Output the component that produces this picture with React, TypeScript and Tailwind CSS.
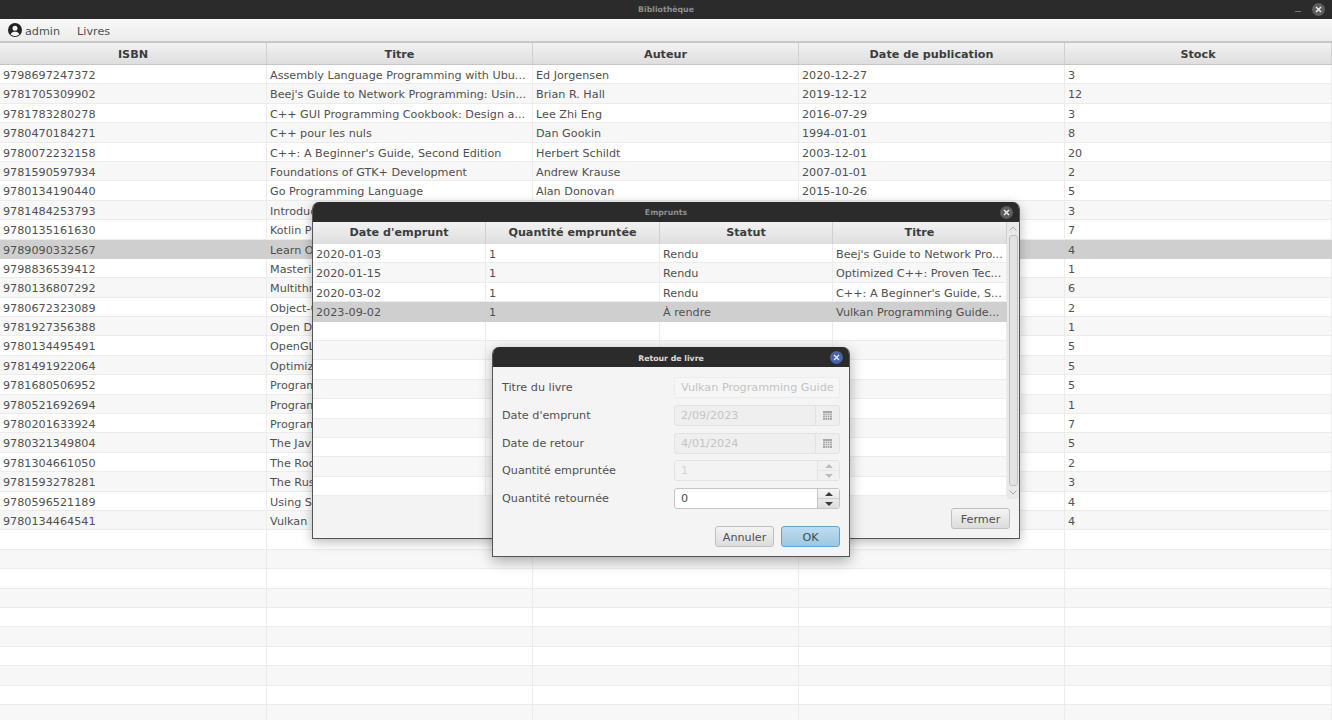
import React from "react";

const books: [string, string, string, string, string][] = [
  ["9798697247372", "Assembly Language Programming with Ubu...", "Ed Jorgensen", "2020-12-27", "3"],
  ["9781705309902", "Beej's Guide to Network Programming: Usin...", "Brian R. Hall", "2019-12-12", "12"],
  ["9781783280278", "C++ GUI Programming Cookbook: Design a...", "Lee Zhi Eng", "2016-07-29", "3"],
  ["9780470184271", "C++ pour les nuls", "Dan Gookin", "1994-01-01", "8"],
  ["9780072232158", "C++: A Beginner's Guide, Second Edition", "Herbert Schildt", "2003-12-01", "20"],
  ["9781590597934", "Foundations of GTK+ Development", "Andrew Krause", "2007-01-01", "2"],
  ["9780134190440", "Go Programming Language", "Alan Donovan", "2015-10-26", "5"],
  ["9781484253793", "Introduction", "", "", "3"],
  ["9780135161630", "Kotlin Programming", "", "", "7"],
  ["9789090332567", "Learn OpenGL", "", "", "4"],
  ["9798836539412", "Mastering", "", "", "1"],
  ["9780136807292", "Multithreading", "", "", "6"],
  ["9780672323089", "Object-Oriented", "", "", "2"],
  ["9781927356388", "Open Data", "", "", "1"],
  ["9780134495491", "OpenGL", "", "", "5"],
  ["9781491922064", "Optimized", "", "", "5"],
  ["9781680506952", "Programming", "", "", "5"],
  ["9780521692694", "Programming", "", "", "1"],
  ["9780201633924", "Programming", "", "", "7"],
  ["9780321349804", "The Java", "", "", "5"],
  ["9781304661050", "The Rook", "", "", "2"],
  ["9781593278281", "The Rust", "", "", "3"],
  ["9780596521189", "Using SQL", "", "", "4"],
  ["9780134464541", "Vulkan", "", "", "4"],
  ["", "", "", "", ""],
  ["", "", "", "", ""],
  ["", "", "", "", ""],
  ["", "", "", "", ""],
  ["", "", "", "", ""],
  ["", "", "", "", ""],
  ["", "", "", "", ""],
  ["", "", "", "", ""],
  ["", "", "", "", ""],
  ["", "", "", "", ""],
];

const loans: [string, string, string, string][] = [
  ["2020-01-03", "1", "Rendu", "Beej's Guide to Network Pro..."],
  ["2020-01-15", "1", "Rendu", "Optimized C++: Proven Tec..."],
  ["2020-03-02", "1", "Rendu", "C++: A Beginner's Guide, S..."],
  ["2023-09-02", "1", "À rendre", "Vulkan Programming Guide..."],
  ["", "", "", ""],
  ["", "", "", ""],
  ["", "", "", ""],
  ["", "", "", ""],
  ["", "", "", ""],
  ["", "", "", ""],
  ["", "", "", ""],
  ["", "", "", ""],
  ["", "", "", ""],
];

const mainCols = ["w-[267px]", "w-[266px]", "w-[266px]", "w-[266px]", "w-[267px]"];
const mainHead = ["ISBN", "Titre", "Auteur", "Date de publication", "Stock"];
const loanCols = ["w-[173px]", "w-[174px]", "w-[173px]", "w-[174px]"];
const loanHead = ["Date d'emprunt", "Quantité empruntée", "Statut", "Titre"];

function CloseDot({ blue = false }: { blue?: boolean }) {
  return (
    <span className={`flex h-[13px] w-[13px] items-center justify-center rounded-full ${blue ? "bg-[#4a63a8]" : "bg-[#5e5e5e]"}`}>
      <svg width="7" height="7" viewBox="0 0 7 7" fill="none">
        <path d="M1 1L6 6M6 1L1 6" stroke={blue ? "#e4e8f4" : "#f0f0f0"} strokeWidth="1.4" />
      </svg>
    </span>
  );
}

function CalendarIcon() {
  return (
    <svg width="9" height="9" viewBox="0 0 9 9">
      <rect width="9" height="9" fill="#a8a8a8" />
      <path d="M0 2.5H9M0 4.5H9M0 6.5H9M2.5 2V9M4.5 2V9M6.5 2V9" stroke="#e2e2e2" strokeWidth="0.7" />
    </svg>
  );
}

function Field({ label, children }: { label: string; children: React.ReactNode }) {
  return (
    <div className="flex h-[21px] items-center justify-between">
      <span className="pt-[2px]">{label}</span>
      {children}
    </div>
  );
}

function DateField({ value }: { value: string }) {
  return (
    <div className="flex h-[21px] w-[166px] rounded-[3px] border border-[#e2e2e2] bg-[#efefef]">
      <span className="flex-1 pl-[6px] leading-[19px] text-[#c4c4c4]">{value}</span>
      <span className="flex w-[24px] items-center justify-center border-l border-[#e2e2e2]">
        <CalendarIcon />
      </span>
    </div>
  );
}

function Spinner({ value, disabled = false }: { value: string; disabled?: boolean }) {
  const c = disabled ? "#bdbdbd" : "#3a3a3a";
  return (
    <div className={`flex h-[21px] w-[166px] rounded-[3px] border ${disabled ? "border-[#e2e2e2] bg-[#f3f3f3]" : "border-[#c4c4c4] bg-white"}`}>
      <span className={`flex-1 pl-[6px] leading-[19px] ${disabled ? "text-[#d4d4d4]" : "text-[#505050]"}`}>{value}</span>
      <span className={`flex w-[22px] flex-col border-l ${disabled ? "border-[#e2e2e2] bg-[#f1f1f1]" : "border-[#c4c4c4] bg-gradient-to-b from-[#f6f6f6] to-[#dedede]"}`}>
        <span className={`flex flex-1 items-center justify-center border-b ${disabled ? "border-[#e6e6e6]" : "border-[#cfcfcf]"}`}>
          <svg width="8" height="4" viewBox="0 0 8 4"><path d="M0 4L4 0L8 4Z" fill={c} /></svg>
        </span>
        <span className="flex flex-1 items-center justify-center">
          <svg width="8" height="4" viewBox="0 0 8 4"><path d="M0 0L4 4L8 0Z" fill={c} /></svg>
        </span>
      </span>
    </div>
  );
}

export default function App() {
  return (
    <div
      className="relative h-[720px] w-[1332px] overflow-hidden bg-white text-[11.2px] text-[#505050]"
      style={{ fontFamily: '"DejaVu Sans", sans-serif' }}
    >
      <div className="relative flex h-[19px] items-center justify-center bg-[#2b2b2b] pt-[1px] text-[7.8px] font-bold text-[#8f8f8f]">
        Bibliothèque
        <div className="absolute right-[7px] top-[3px] flex items-center gap-[11px]">
          <span className="mt-[4px] h-px w-[6px] bg-[#777]" />
          <CloseDot />
        </div>
      </div>

      <div className="flex h-[23px] items-center gap-[17px] border-b border-[#c8c8c8] bg-gradient-to-b from-[#f8f8f8] to-[#ececec] pl-[8px] pt-[1px]">
        <span className="flex items-center gap-[3px]">
          <svg width="14" height="14" viewBox="0 0 14 14">
            <circle cx="7" cy="7" r="7" fill="#222" />
            <circle cx="7" cy="5.3" r="2.5" fill="#f2f2f2" />
            <path d="M2.6 11.2C3.6 9.3 5.2 8.8 7 8.8C8.8 8.8 10.4 9.3 11.4 11.2C10.2 12.4 8.7 13 7 13C5.3 13 3.8 12.4 2.6 11.2Z" fill="#f2f2f2" />
          </svg>
          <span className="pt-[3px]">admin</span>
        </span>
        <span className="pt-[3px]">Livres</span>
      </div>

      <div className="flex h-[23px] border-y border-[#c6c6c6] bg-gradient-to-b from-[#f2f2f2] to-[#dedede] font-bold text-[#3c3c3c]">
        {mainHead.map((h, i) => (
          <div key={h} className={`${mainCols[i]} border-r border-[#d0d0d0] text-center leading-[23px]`}>{h}</div>
        ))}
      </div>

      <div>
        {books.map((b, r) => (
          <div
            key={r}
            className={`flex h-[19.4px] border-b ${r === 9 ? "border-[#cfcfcf] bg-[#cfcfcf]" : r % 2 ? "border-[#ececec] bg-[#f7f7f7]" : "border-[#ececec] bg-white"}`}
          >
            {b.map((c, i) => (
              <div
                key={i}
                className={`${mainCols[i]} overflow-hidden whitespace-nowrap border-r ${r === 9 ? "border-[#cfcfcf]" : "border-[#ececec]"} pl-[3px] pr-[3px] leading-[22px]`}
              >
                {c}
              </div>
            ))}
          </div>
        ))}
      </div>

      {/* Emprunts window */}
      <div className="absolute left-[312px] top-[202px] flex h-[337px] w-[708px] flex-col overflow-hidden rounded-t-[7px] border-x border-b border-[#555] bg-[#f3f3f3] shadow-[0_3px_12px_rgba(0,0,0,0.28)]">
        <div className="relative flex h-[20px] shrink-0 items-center justify-center bg-[#2b2b2b] pt-[1px] text-[7.8px] font-bold text-[#8f8f8f]">
          Emprunts
          <div className="absolute right-[6px] top-[4px]"><CloseDot /></div>
        </div>
        <div className="flex h-[277px] shrink-0">
          <div className="flex w-[694px] flex-col overflow-hidden">
            <div className="flex h-[22px] shrink-0 bg-gradient-to-b from-[#f2f2f2] to-[#dedede] font-bold text-[#3c3c3c]">
              {loanHead.map((h, i) => (
                <div key={h} className={`${loanCols[i]} border-r border-[#d0d0d0] text-center leading-[22px]`}>{h}</div>
              ))}
            </div>
            {loans.map((l, r) => (
              <div key={r} className={`flex h-[19.4px] shrink-0 border-b ${r === 3 ? "border-[#cfcfcf] bg-[#cfcfcf]" : r % 2 ? "border-[#ececec] bg-[#f7f7f7]" : "border-[#ececec] bg-white"}`}>
                {l.map((c, i) => (
                  <div key={i} className={`${loanCols[i]} overflow-hidden whitespace-nowrap border-r ${r === 3 ? "border-[#cfcfcf]" : "border-[#ececec]"} pl-[3px] leading-[22px]`}>{c}</div>
                ))}
              </div>
            ))}
          </div>
          <div className="flex w-[12px] flex-col items-center bg-[#e9e9e9]">
            <div className="flex h-[13px] items-center justify-center">
              <svg width="8" height="5" viewBox="0 0 8 5" fill="none"><path d="M0.5 4.5L4 1L7.5 4.5" stroke="#a8a8a8" /></svg>
            </div>
            <div className="w-[9px] flex-1 rounded-[3px] border border-[#c0c0c0] bg-[#e2e2e2]" />
            <div className="flex h-[13px] items-center justify-center">
              <svg width="8" height="5" viewBox="0 0 8 5" fill="none"><path d="M0.5 0.5L4 4L7.5 0.5" stroke="#a8a8a8" /></svg>
            </div>
          </div>
        </div>
        <div className="flex flex-1 justify-end pr-[9px] pt-[9px]">
          <button className="h-[21px] w-[59px] rounded-[3px] border border-[#c0c0c0] bg-gradient-to-b from-[#f4f4f4] to-[#dcdcdc] pt-[3px] text-[#505050]">Fermer</button>
        </div>
      </div>

      {/* Retour de livre dialog */}
      <div className="absolute left-[492px] top-[347px] flex h-[210px] w-[358px] flex-col overflow-hidden rounded-t-[7px] border-x border-b border-[#555] bg-[#f4f4f4] shadow-[0_4px_14px_rgba(0,0,0,0.32)]">
        <div className="relative flex h-[20px] shrink-0 items-center justify-center bg-[#2b2b2b] pt-[3px] text-[7.8px] font-bold text-[#dcdcdc]">
          Retour de livre
          <div className="absolute right-[6px] top-[4px]"><CloseDot blue /></div>
        </div>
        <div className="flex flex-col gap-[6.75px] pl-[9px] pr-[9px] pt-[10px]">
          <Field label="Titre du livre">
            <div className="h-[21px] w-[166px] overflow-hidden whitespace-nowrap rounded-[2px] border border-[#ececec] bg-[#f6f6f6] pl-[6px] leading-[19px] text-[#c4c4c4]">Vulkan Programming Guide</div>
          </Field>
          <Field label="Date d'emprunt"><DateField value="2/09/2023" /></Field>
          <Field label="Date de retour"><DateField value="4/01/2024" /></Field>
          <Field label="Quantité empruntée"><Spinner value="1" disabled /></Field>
          <Field label="Quantité retournée"><Spinner value="0" /></Field>
        </div>
        <div className="flex justify-end gap-[7px] pr-[9px] pt-[17px]">
          <button className="h-[21px] w-[59px] rounded-[3px] border border-[#c0c0c0] bg-gradient-to-b from-[#f4f4f4] to-[#dcdcdc] pt-[3px] text-[#505050]">Annuler</button>
          <button className="h-[21px] w-[59px] rounded-[3px] border border-[#5ea6cf] bg-gradient-to-b from-[#bfdcee] to-[#9cc8e2] pt-[3px] text-[#3f4a50]">OK</button>
        </div>
      </div>
    </div>
  );
}
